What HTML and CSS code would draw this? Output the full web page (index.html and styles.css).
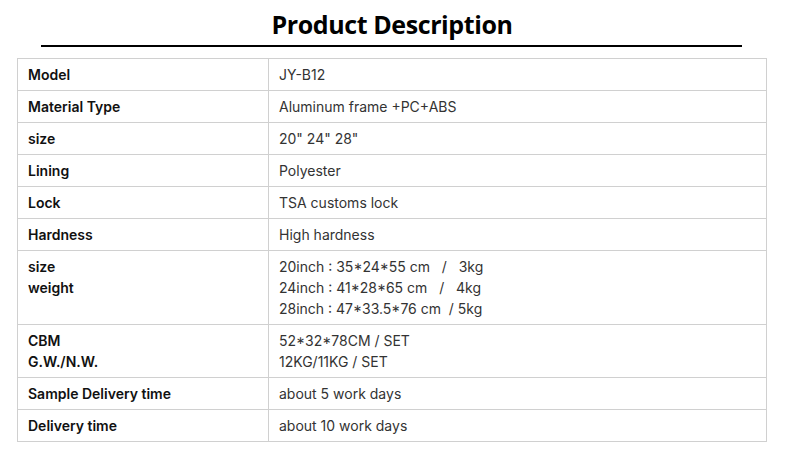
FILE: index.html
```html
<!DOCTYPE html>
<html>
<head>
<meta charset="utf-8">
<link rel="stylesheet" href="styles.css">
</head>
<body>
<div class="page">
  <h1 class="title">Product Description</h1>
  <div class="rule"></div>
  <table class="spec">
    <tr><td class="k">Model</td><td class="v">JY-B12</td></tr>
    <tr><td class="k">Material Type</td><td class="v">Aluminum frame +PC+ABS</td></tr>
    <tr><td class="k">size</td><td class="v">20" 24" 28"</td></tr>
    <tr><td class="k">Lining</td><td class="v">Polyester</td></tr>
    <tr><td class="k">Lock</td><td class="v">TSA customs lock</td></tr>
    <tr><td class="k">Hardness</td><td class="v">High hardness</td></tr>
    <tr><td class="k">size<br>weight</td><td class="v">20inch : 35*24*55 cm &nbsp; / &nbsp; 3kg<br>24inch : 41*28*65 cm &nbsp; / &nbsp; 4kg<br>28inch : 47*33.5*76 cm &nbsp;/ 5kg</td></tr>
    <tr><td class="k">CBM<br>G.W./N.W.</td><td class="v">52*32*78CM / SET<br>12KG/11KG / SET</td></tr>
    <tr><td class="k">Sample Delivery time</td><td class="v">about 5 work days</td></tr>
    <tr><td class="k">Delivery time</td><td class="v">about 10 work days</td></tr>
  </table>
</div>
</body>
</html>
```
FILE: styles.css
```css
html, body {
  margin: 0;
  padding: 0;
  background: #fff;
}
.page {
  width: 750px;
  margin-left: 17px;
  padding-top: 6px;
}
.title {
  margin: 0;
  text-align: center;
  font-family: "Open Sans", sans-serif;
  font-weight: 700;
  font-size: 25px;
  letter-spacing: -0.4px;
  line-height: 36px;
  color: #000;
}
.rule {
  height: 2px;
  background: #000;
  margin: 3px 25px 11px 24px;
}
.spec {
  width: 750px;
  border-collapse: collapse;
  font-family: Inter, sans-serif;
  font-size: 14px;
  line-height: 21px;
}
.spec td {
  border: 1px solid #d0d0d0;
  padding: 5px 10px;
  vertical-align: top;
  text-align: left;
}
.k {
  width: 230px;
  font-weight: 600;
  color: #111;
}
.v {
  color: #333;
}
```
